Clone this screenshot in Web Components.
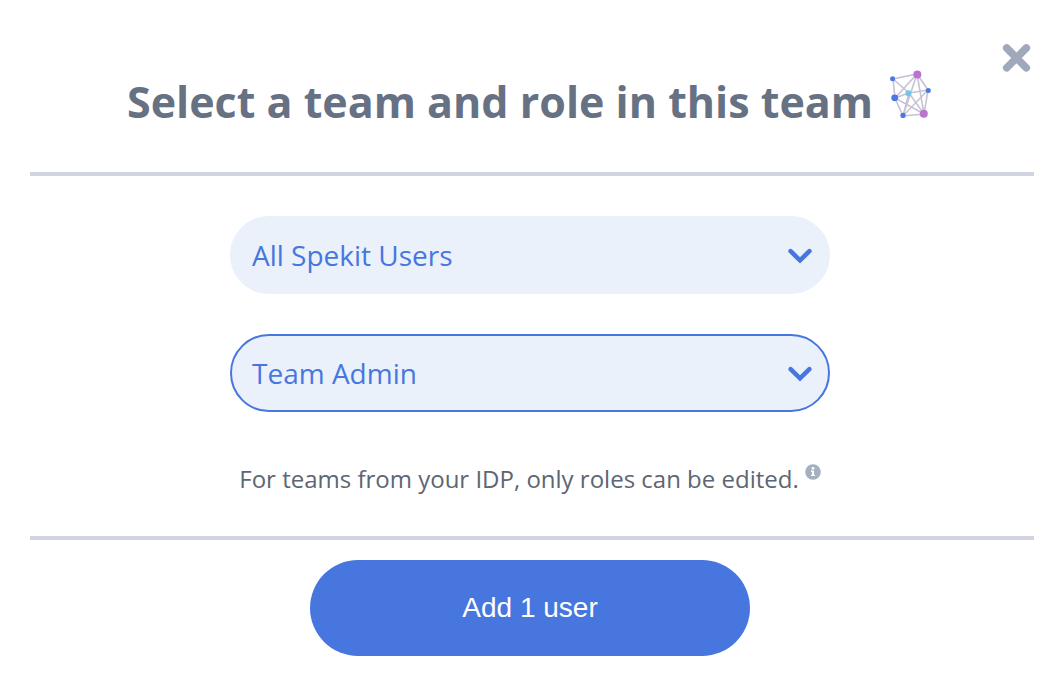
<!DOCTYPE html>
<html lang="en">
<head>
<meta charset="utf-8">
<meta name="viewport" content="width=device-width, initial-scale=1">
<title>Select a team and role</title>
<style>
  body { margin: 0; background: #fff; font-family: "Open Sans", "Noto Sans", sans-serif; }
</style>
</head>
<body>
<team-dialog>
  <dialog-title slot="title">Select a team and role in this team</dialog-title>
  <pill-select label="Team" value="All Spekit Users"></pill-select>
  <pill-select label="Role" value="Team Admin" active></pill-select>
  <info-note>For teams from your IDP, only roles can be edited.</info-note>
  <primary-button slot="action">Add 1 user</primary-button>
</team-dialog>

<script>
class BaseElement extends HTMLElement {
  constructor() {
    super();
    this.attachShadow({ mode: "open" }).innerHTML = this.constructor.markup;
  }
}

customElements.define("team-dialog", class extends BaseElement {
  static markup = `
    <style>
      :host { display: block; }
      section { position: relative; padding: 64px 30px 30px; }
      .close { position: absolute; top: 42px; right: 28px; width: 32px; height: 32px; padding: 0; border: 0; background: none; cursor: pointer; }
      .close svg { display: block; }
      hr { height: 4px; margin: 0 -4px 0 0; border: 0; background: #d0d4e0; }
      header { margin-bottom: 30px; }
      .body { display: flex; flex-direction: column; align-items: center; gap: 40px; padding: 40px 0; }
      footer { display: flex; justify-content: center; padding-top: 20px; }
    </style>
    <section role="dialog" aria-label="Select a team and role in this team">
      <button class="close" aria-label="Close">
        <svg width="32" height="32" viewBox="0 0 32 32" fill="none" stroke="#a0a8bb" stroke-width="7.6" stroke-linecap="round"><path d="M6.7 6 26.3 25.8M26.3 6 6.7 25.8"/></svg>
      </button>
      <header><slot name="title"></slot></header>
      <hr>
      <div class="body"><slot></slot></div>
      <hr>
      <footer><slot name="action"></slot></footer>
    </section>`;
});

customElements.define("dialog-title", class extends BaseElement {
  static markup = `
    <style>
      :host { display: flex; justify-content: center; gap: 16px; color: #667284; }
      h1 { margin: 0; padding-top: 8px; font-size: 43px; line-height: 60px; height: 70px; font-weight: 700; }
      svg { flex: none; margin-top: 4px; }
    </style>
    <h1><slot></slot></h1>
    <svg width="44" height="54" viewBox="888 68 44 54" aria-hidden="true">
      <path d="M892 79 916 74 927 90 923 114 902 116 894 98ZM892 79 908 93 923 114 894 98 908 93 927 90M916 74 894 98M927 90 902 116 916 74 923 114M902 116 908 93" fill="none" stroke="#c6c3d4" stroke-width="1.6"/>
      <g fill="#4878e0"><circle cx="891.6" cy="78.8" r="2.5"/><circle cx="893.7" cy="97.8" r="3.4"/><circle cx="927.3" cy="90.5" r="2.5"/><circle cx="902" cy="115.4" r="2.6"/></g>
      <circle cx="907.4" cy="93.3" r="3" fill="#72c5e4"/>
      <g fill="#bb73cf"><circle cx="916.3" cy="74.4" r="4"/><circle cx="922.8" cy="113.7" r="4"/></g>
    </svg>`;
});

customElements.define("pill-select", class extends BaseElement {
  static markup = `
    <style>
      :host { display: block; position: relative; width: 600px; max-width: 100%; }
      select { appearance: none; display: block; box-sizing: border-box; width: 100%; height: 78px; margin: 0; padding: 0 60px 0 20px; border: 2px solid #eaf1fb; border-radius: 39px; background: #eaf1fb; color: #4876df; font: 400 28px/40px "Open Sans", "Noto Sans", sans-serif; outline: 0; }
      :host([active]) select { border-color: #4876df; }
      svg { position: absolute; right: 16px; top: 28px; pointer-events: none; }
    </style>
    <select><option></option></select>
    <svg width="28" height="24" viewBox="0 0 28 24" fill="none" stroke="#4876df" stroke-width="4.6" stroke-linecap="round"><path d="M4.6 7.2 14 16.3 23.4 7.2"/></svg>`;
  connectedCallback() {
    this.shadowRoot.querySelector("select").setAttribute("aria-label", this.getAttribute("label"));
    this.shadowRoot.querySelector("option").textContent = this.getAttribute("value");
  }
});

customElements.define("info-note", class extends BaseElement {
  static markup = `
    <style>
      :host { display: flex; gap: 6px; padding-top: 10px; color: #5d6672; }
      p { margin: 0; font-size: 24px; line-height: 34px; }
      svg { flex: none; margin-top: 2px; }
    </style>
    <p><slot></slot></p>
    <svg width="16" height="16" viewBox="0 0 16 16" aria-hidden="true"><circle cx="8" cy="8" r="7.8" fill="#a5b1c0"/><circle cx="8" cy="4.3" r="1.4" fill="#fff"/><path d="M6 6.5h3v4.2h1v1.4H6v-1.4h1V7.9H6z" fill="#fff"/></svg>`;
});

customElements.define("primary-button", class extends BaseElement {
  static markup = `
    <style>
      :host { display: block; width: 440px; max-width: 100%; }
      button { display: block; width: 100%; height: 96px; padding: 0; border: 0; border-radius: 48px; background: #4876df; color: #fff; font: 400 28px/32px "Liberation Sans", Arial, sans-serif; cursor: pointer; }
    </style>
    <button type="button"><slot></slot></button>`;
});
</script>
</body>
</html>
